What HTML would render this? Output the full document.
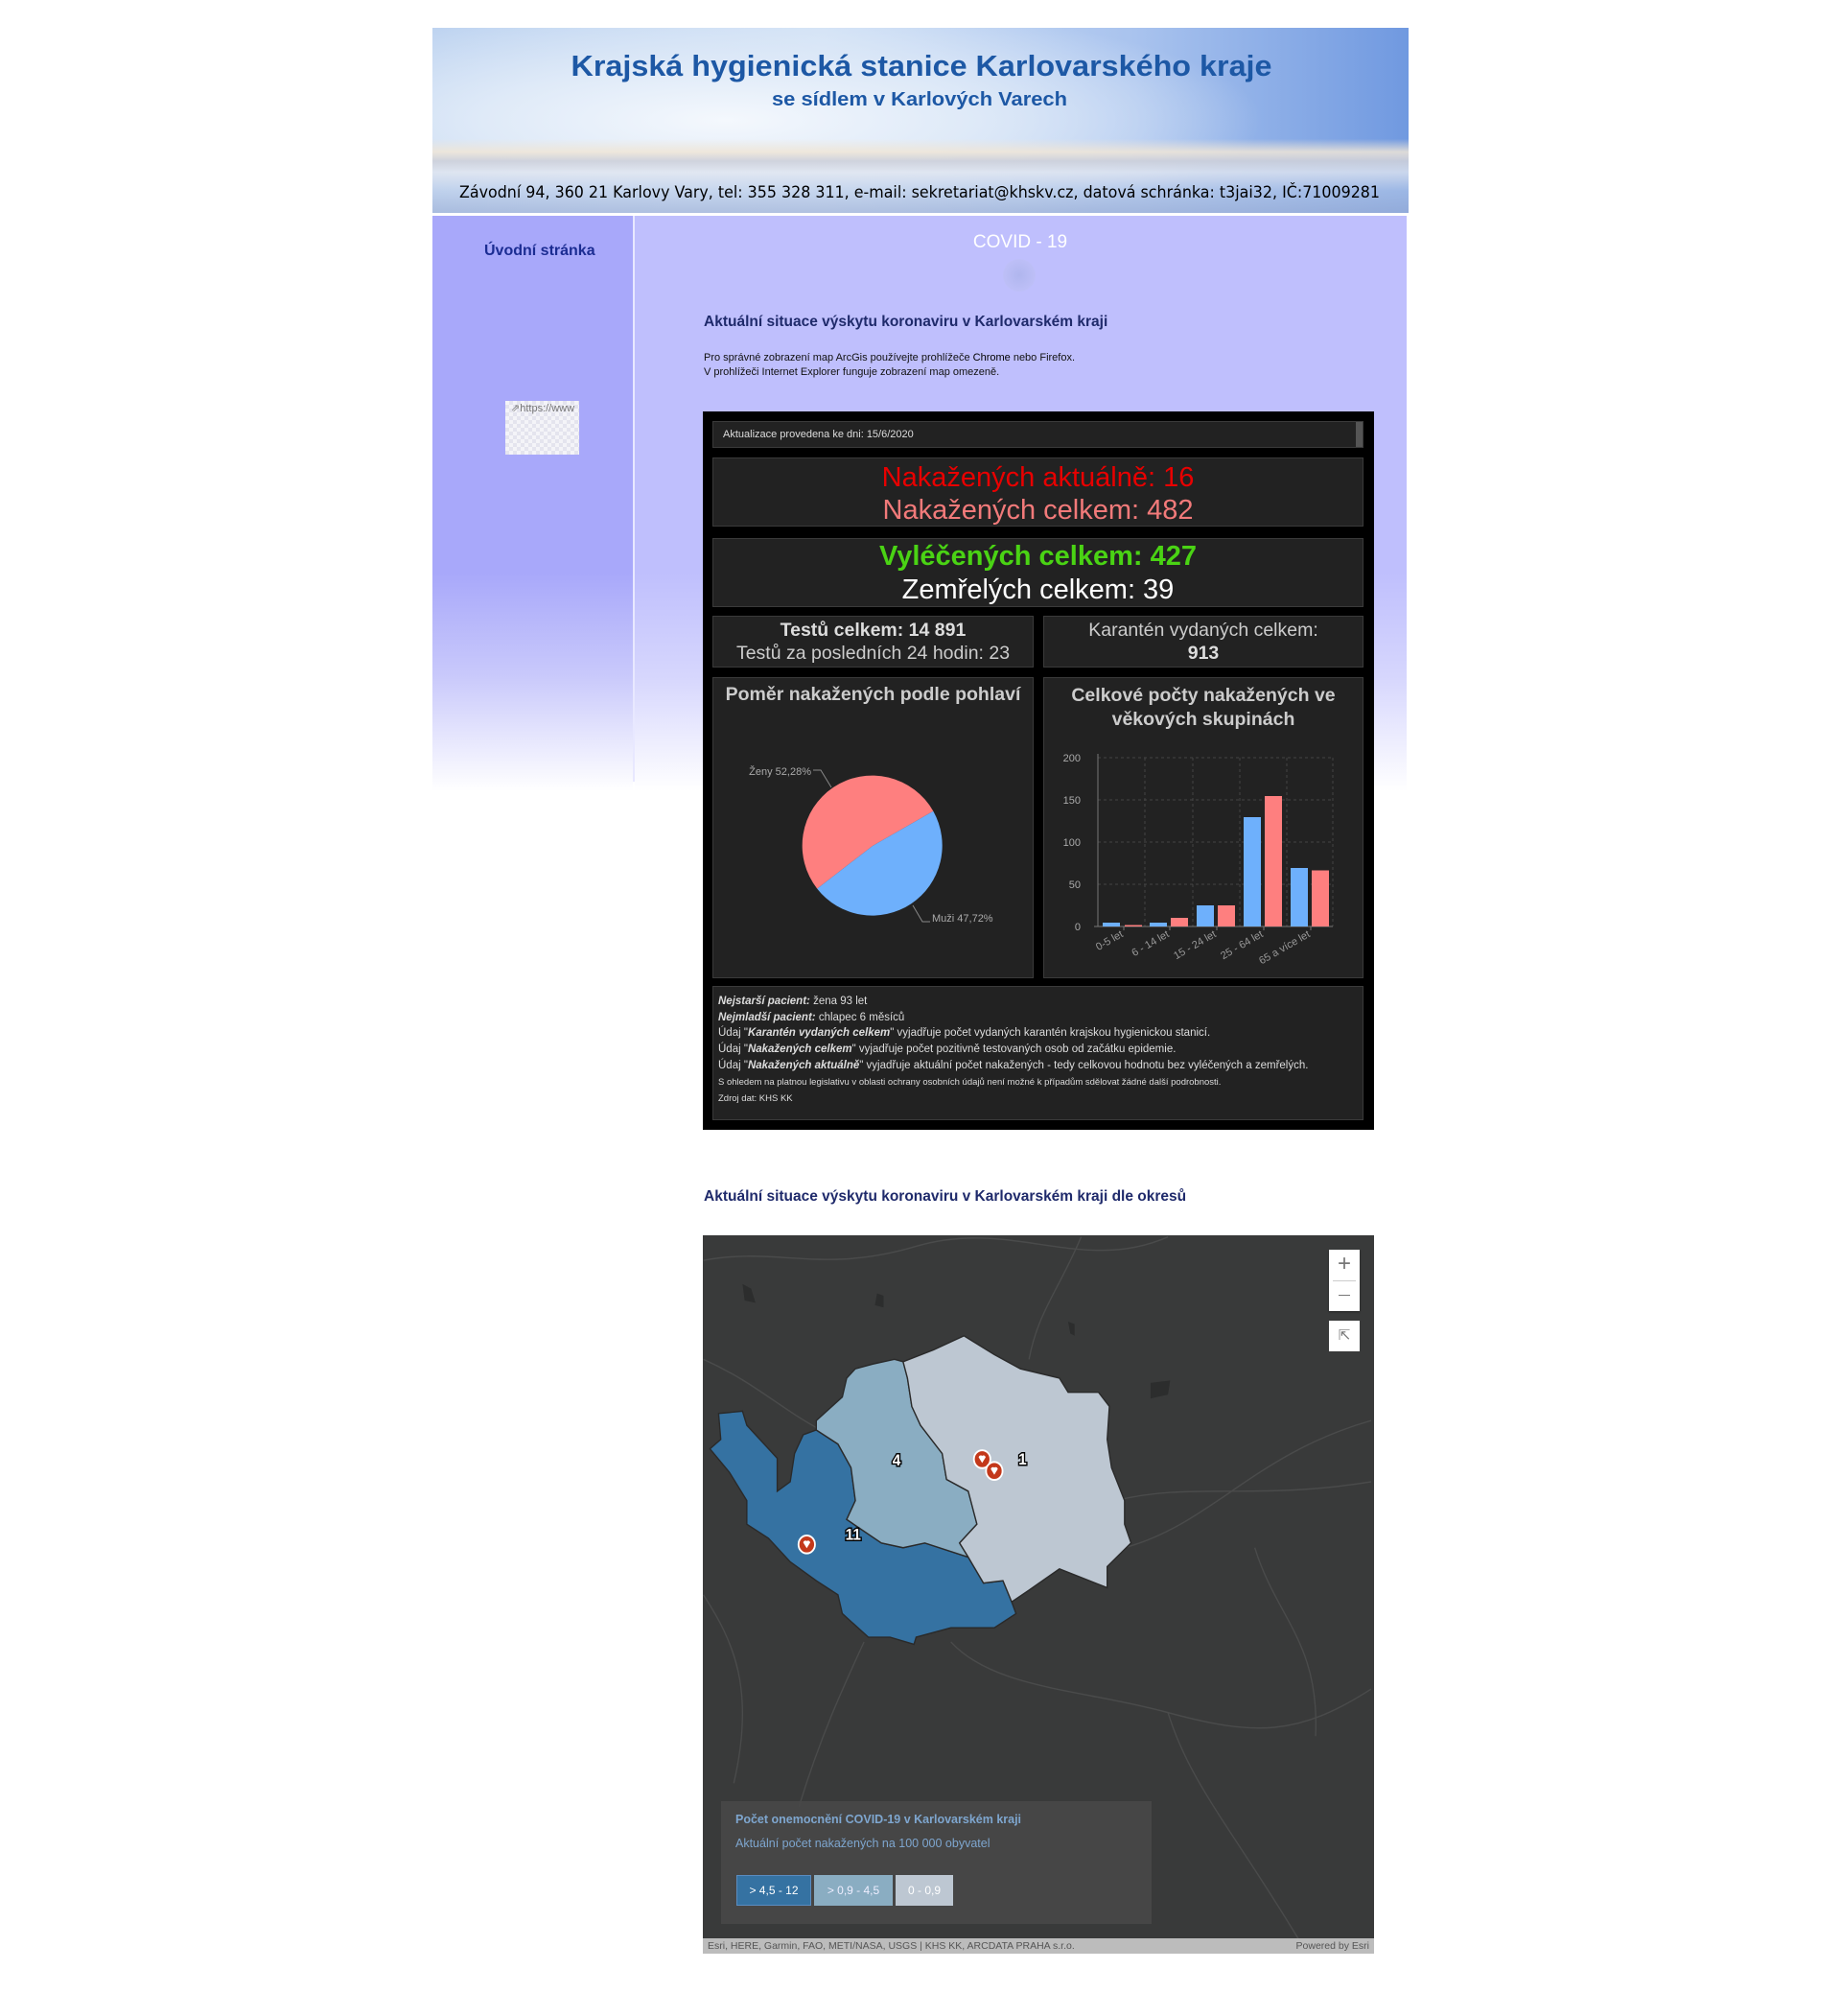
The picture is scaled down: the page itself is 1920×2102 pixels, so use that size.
<!DOCTYPE html>
<html><head><meta charset="utf-8">
<style>
*{margin:0;padding:0;box-sizing:border-box}
body{width:1920px;height:2102px;background:#fff;position:relative;overflow:hidden;font-family:"Liberation Sans",Arial,sans-serif}
.a{position:absolute}
.hdr{left:451px;top:29px;width:1018px;height:193px;overflow:hidden;
background:
linear-gradient(180deg,rgba(255,255,255,0) 0%,rgba(255,255,255,0) 60%,rgba(240,230,215,.85) 67%,rgba(205,208,218,.9) 72%,rgba(225,230,240,.8) 78%,rgba(185,203,232,.6) 88%,rgba(160,178,215,.7) 100%),
radial-gradient(ellipse 55% 65% at 30% 50%,#f4f8fd 0%,#dfeaf8 45%,rgba(200,220,245,0) 100%),
linear-gradient(90deg,#b9d0ef 0%,#cfe0f5 40%,#a9c3ee 72%,#7099e0 100%)}
.nav{left:451px;top:225px;width:209px;height:600px;background:linear-gradient(180deg,#a8a8fa 0%,#a8a8fa 62%,#c9c9fb 80%,#fff 100%)}
.main{left:662px;top:225px;width:805px;height:600px;background:linear-gradient(180deg,#bfbffd 0%,#bfbffd 62%,#d6d6fd 80%,#fff 100%)}
.navline{left:660px;top:225px;width:2px;height:590px;background:#e8e8ff}
.pan{background:#222;border:1px solid #3a3a3a}
.c{text-align:center}
.dash{left:733px;top:429px;width:700px;height:749px;background:#000}
</style></head><body>
<div class="a hdr"></div>
<svg class="a" style="left:451px;top:29px" width="1018" height="193">
<text x="510" y="50" text-anchor="middle" font-family="Liberation Sans" font-weight="bold" font-size="31" fill="#1d58a5" textLength="731" lengthAdjust="spacingAndGlyphs">Krajská hygienická stanice Karlovarského kraje</text>
<text x="508" y="81" text-anchor="middle" font-family="Liberation Sans" font-weight="bold" font-size="20" fill="#1d58a5" textLength="308" lengthAdjust="spacingAndGlyphs">se sídlem v Karlových Varech</text>
<text x="508" y="177" text-anchor="middle" font-family="DejaVu Sans" font-size="17" fill="#000" textLength="960" lengthAdjust="spacingAndGlyphs">Závodní 94, 360 21 Karlovy Vary, tel: 355 328 311, e-mail: sekretariat@khskv.cz, datová schránka: t3jai32, IČ:71009281</text>
</svg>
<div class="a nav"></div>
<div class="a main"></div>
<div class="a navline"></div>
<div class="a" style="left:505px;top:253px;width:120px;font-size:16px;font-weight:bold;color:#1b2c92;white-space:nowrap">Úvodní stránka</div>
<div class="a" style="left:527px;top:418px;width:77px;height:56px;background:repeating-conic-gradient(#e4e4ee 0 25%,#f4f4f8 0 50%) 0 0/8px 8px;font-size:11px;color:#777;padding:1px 0 0 6px;overflow:hidden;white-space:nowrap">⇗https://www</div>
<div class="a c" style="left:960px;top:242px;width:208px;font-size:19px;color:#fff">COVID - 19</div>
<div class="a" style="left:1046px;top:270px;width:34px;height:34px;border-radius:50%;background:radial-gradient(circle,#b0b6ee,#c3c3fb)"></div>
<div class="a" style="left:734px;top:327px;font-size:15.5px;font-weight:bold;color:#1f2a6b">Aktuální situace výskytu koronaviru v Karlovarském kraji</div>
<div class="a" style="left:734px;top:366px;font-size:11px;line-height:15px;color:#111">Pro správné zobrazení map ArcGis používejte prohlížeče <b style="font-weight:normal;color:#000">Chrome</b> nebo Firefox.<br>V prohlížeči Internet Explorer funguje zobrazení map omezeně.</div>

<div class="a dash"></div>
<div class="a pan" style="left:743px;top:439px;width:679px;height:28px;font-size:11px;color:#ddd;padding:7px 0 0 10px">Aktualizace provedena ke dni: 15/6/2020</div>
<div class="a" style="left:1414px;top:440px;width:7px;height:26px;background:#555"></div>
<div class="a pan c" style="left:743px;top:477px;width:679px;height:72px;padding-top:3px">
<div style="font-size:29px;line-height:34px;color:#e80000">Nakažených aktuálně: 16</div>
<div style="font-size:29px;line-height:34px;color:#f27a7a">Nakažených celkem: 482</div></div>
<div class="a pan c" style="left:743px;top:561px;width:679px;height:72px;padding-top:1px">
<div style="font-size:29px;line-height:35px;color:#4ad314;font-weight:bold">Vyléčených celkem: 427</div>
<div style="font-size:29px;line-height:35px;color:#fff">Zemřelých celkem: 39</div></div>
<div class="a pan c" style="left:743px;top:642px;width:335px;height:54px;padding-top:2px">
<div style="font-size:19.5px;line-height:24px;color:#ddd;font-weight:bold">Testů celkem: 14 891</div>
<div style="font-size:19.5px;line-height:24px;color:#ccc">Testů za posledních 24 hodin: 23</div></div>
<div class="a pan c" style="left:1088px;top:642px;width:334px;height:54px;padding-top:2px">
<div style="font-size:19.5px;line-height:24px;color:#ccc">Karantén vydaných celkem:</div>
<div style="font-size:19.5px;line-height:24px;color:#ddd;font-weight:bold">913</div></div>
<div class="a pan c" style="left:743px;top:706px;width:335px;height:314px;padding-top:6px;font-size:19.5px;font-weight:bold;color:#ccc">Poměr nakažených podle pohlaví</div>
<div class="a pan c" style="left:1088px;top:706px;width:334px;height:314px;padding-top:6px;font-size:19.5px;line-height:25px;font-weight:bold;color:#ccc">Celkové počty nakažených ve<br>věkových skupinách</div>
<div class="a pan" style="left:743px;top:1028px;width:679px;height:140px;padding:7px 0 0 5px;font-size:11.5px;line-height:16.7px;color:#ddd">
<i style="font-weight:bold">Nejstarší pacient:</i> žena 93 let<br>
<i style="font-weight:bold">Nejmladší pacient:</i> chlapec 6 měsíců<br>
Údaj "<i style="font-weight:bold">Karantén vydaných celkem</i>" vyjadřuje počet vydaných karantén krajskou hygienickou stanicí.<br>
Údaj "<i style="font-weight:bold">Nakažených celkem</i>" vyjadřuje počet pozitivně testovaných osob od začátku epidemie.<br>
Údaj "<i style="font-weight:bold">Nakažených aktuálně</i>" vyjadřuje aktuální počet nakažených - tedy celkovou hodnotu bez vyléčených a zemřelých.<br>
<span style="font-size:9.5px">S ohledem na platnou legislativu v oblasti ochrany osobních údajů není možné k případům sdělovat žádné další podrobnosti.</span><br>
<span style="font-size:9.5px">Zdroj dat: KHS KK</span></div>

<svg class="a" style="left:0;top:0" width="1920" height="1100" font-family="Liberation Sans">
<path d="M910,882 L852.2,926.6 A73,73 0 1,1 973.3,845.8 Z" fill="#fe7f7f"/>
<path d="M910,882 L973.3,845.8 A73,73 0 0,1 852.2,926.6 Z" fill="#6eb0fc"/>
<polyline points="848,803 856,803 867,821" fill="none" stroke="#888" stroke-width="1"/>
<text x="846" y="808" text-anchor="end" font-size="11" fill="#aaa">Ženy 52,28%</text>
<polyline points="952,944 962,961 970,961" fill="none" stroke="#888" stroke-width="1"/>
<text x="972" y="961" font-size="11" fill="#aaa">Muži 47,72%</text>
<g stroke="#444" stroke-dasharray="3,3" stroke-width="1">
<line x1="1145" y1="790" x2="1390" y2="790"/><line x1="1145" y1="834" x2="1390" y2="834"/>
<line x1="1145" y1="878" x2="1390" y2="878"/><line x1="1145" y1="922" x2="1390" y2="922"/>
<line x1="1194" y1="790" x2="1194" y2="966"/><line x1="1244" y1="790" x2="1244" y2="966"/>
<line x1="1293" y1="790" x2="1293" y2="966"/><line x1="1342" y1="790" x2="1342" y2="966"/><line x1="1390" y1="790" x2="1390" y2="966"/>
</g>
<line x1="1145" y1="786" x2="1145" y2="966" stroke="#777"/>
<line x1="1141" y1="966" x2="1390" y2="966" stroke="#777"/>
<g fill="#aaa" font-size="11" text-anchor="end">
<text x="1127" y="794">200</text><text x="1127" y="838">150</text><text x="1127" y="882">100</text><text x="1127" y="926">50</text><text x="1127" y="970">0</text></g>
<g fill="#6eb0fc"><rect x="1150" y="962" width="18" height="4"/><rect x="1199" y="962" width="18" height="4"/><rect x="1248" y="944" width="18" height="22"/><rect x="1297" y="852" width="18" height="114"/><rect x="1346" y="905" width="18" height="61"/></g>
<g fill="#fe7f7f"><rect x="1173" y="964.5" width="18" height="1.5"/><rect x="1221" y="957" width="18" height="9"/><rect x="1270" y="944" width="18" height="22"/><rect x="1319" y="830" width="18" height="136"/><rect x="1368" y="907.5" width="18" height="58.5"/></g>
<g stroke="#777"><line x1="1172" y1="966" x2="1172" y2="970"/><line x1="1220" y1="966" x2="1220" y2="970"/><line x1="1269" y1="966" x2="1269" y2="970"/><line x1="1318" y1="966" x2="1318" y2="970"/><line x1="1367" y1="966" x2="1367" y2="970"/></g>
<g fill="#999" font-size="11" text-anchor="end">
<text transform="translate(1172,976) rotate(-30)">0-5 let</text>
<text transform="translate(1220,976) rotate(-30)">6 - 14 let</text>
<text transform="translate(1269,976) rotate(-30)">15 - 24 let</text>
<text transform="translate(1318,976) rotate(-30)">25 - 64 let</text>
<text transform="translate(1367,976) rotate(-30)">65 a více let</text></g>
</svg>

<div class="a" style="left:734px;top:1239px;font-size:15.5px;font-weight:bold;color:#1f2a6b">Aktuální situace výskytu koronaviru v Karlovarském kraji dle okresů</div>

<div class="a" style="left:733px;top:1288px;width:700px;height:749px;background:#393a3a;overflow:hidden">
<svg class="a" style="left:-13px;top:-18px" width="710" height="770" viewBox="0 0 1568 1568" preserveAspectRatio="none">
<g fill="none" stroke="#4a4b4b" stroke-width="3">
<path d="M30,90 C200,60 300,120 520,60 S900,120 1100,40"/>
<path d="M900,40 C850,150 800,200 780,300"/>
<path d="M1000,700 C1200,650 1300,500 1568,430"/>
<path d="M980,600 C1150,560 1300,600 1568,560"/>
<path d="M600,900 C700,1000 900,1000 1100,1050 S1400,1100 1568,1000"/>
<path d="M400,900 C350,1000 300,1100 250,1250"/>
<path d="M1100,1050 C1150,1200 1250,1300 1400,1530"/>
<path d="M30,800 C100,900 150,1000 100,1200"/>
<path d="M1300,700 C1350,850 1450,900 1440,1100"/>
<path d="M30,300 C150,350 200,400 300,450"/>
</g>
<g fill="#2c2d2d"><path d="M120,140 l20,10 10,30 -25,-5z"/><path d="M430,160 l15,5 0,25 -20,-5z"/><path d="M1060,350 l45,-5 -5,30 -40,8z"/><path d="M870,220 l15,5 0,25 -10,-5z"/></g>
<path fill="#3572a2" stroke="#2a2a2a" stroke-width="3" d="M290,450 L340,480 370,530 380,600 360,640 440,690 490,700 540,690 640,720 675,775 720,770 740,815 750,840 700,870 600,870 520,890 515,905 460,890 410,890 350,840 340,800 290,770 230,730 180,680 130,650 130,600 90,540 45,490 70,470 65,415 120,410 130,440 180,490 200,510 200,580 230,560 240,500 260,460 Z"/>
<path fill="#8aadc2" stroke="#2a2a2a" stroke-width="3" d="M490,305 L500,340 510,400 530,440 580,500 590,555 640,580 660,650 620,690 640,720 540,690 490,700 440,690 360,640 380,600 370,530 340,480 290,450 290,430 350,380 360,340 380,320 420,310 470,300 Z"/>
<path fill="#bdc7d2" stroke="#2a2a2a" stroke-width="3" d="M490,305 L560,280 630,250 700,290 760,320 850,340 870,370 940,370 965,400 960,470 970,530 1000,600 1000,650 1015,690 960,740 960,785 850,745 780,790 740,815 720,770 675,775 640,720 620,690 660,650 640,580 590,555 580,500 530,440 510,400 500,340 Z"/>
<g fill="#fff" stroke="#000" stroke-width="6" paint-order="stroke" font-family="Liberation Sans" font-weight="bold" font-size="34" text-anchor="middle">
<text x="475" y="525">4</text><text x="765" y="523">1</text><text x="375" y="683">11</text></g>
<g fill="#c3381a" stroke="#fff" stroke-width="4">
<circle cx="672" cy="512" r="19"/><circle cx="700" cy="537" r="19"/><circle cx="268" cy="693" r="19"/></g>
<g fill="#fff"><path d="M664,508 a5,5 0 0 1 8,-3 a5,5 0 0 1 8,3 l-8,12z"/><path d="M692,533 a5,5 0 0 1 8,-3 a5,5 0 0 1 8,3 l-8,12z"/><path d="M260,689 a5,5 0 0 1 8,-3 a5,5 0 0 1 8,3 l-8,12z"/></g>
</svg>
<div class="a" style="left:653px;top:15px;width:32px;height:64px;background:#fff;box-shadow:0 1px 2px rgba(0,0,0,.4)"></div>
<div class="a" style="left:657px;top:47px;width:24px;height:1px;background:#ccc"></div>
<div class="a c" style="left:653px;top:16px;width:32px;font-size:24px;line-height:28px;color:#777">+</div>
<div class="a" style="left:663px;top:62px;width:12px;height:1px;background:#777"></div>
<div class="a c" style="left:653px;top:89px;width:32px;height:32px;background:#fff;font-size:15px;line-height:32px;color:#777">⇱</div>
<div class="a" style="left:19px;top:590px;width:449px;height:128px;background:rgba(72,72,72,.9)">
<div class="a" style="left:15px;top:12px;font-size:12.5px;font-weight:bold;color:#7ea6cf;white-space:nowrap">Počet onemocnění COVID-19 v Karlovarském kraji</div>
<div class="a" style="left:15px;top:37px;font-size:12.5px;color:#7ea6cf;white-space:nowrap">Aktuální počet nakažených na 100 000 obyvatel</div>
<div class="a c" style="left:16px;top:77px;width:78px;height:32px;background:#3572a2;border:1px solid #5a8cc0;color:#fff;font-size:12px;line-height:30px">&gt; 4,5 - 12</div>
<div class="a c" style="left:97px;top:77px;width:82px;height:32px;background:#8aadc2;color:#eef;font-size:12px;line-height:32px">&gt; 0,9 - 4,5</div>
<div class="a c" style="left:182px;top:77px;width:60px;height:32px;background:#bdc7d2;color:#fff;font-size:12px;line-height:32px">0 - 0,9</div>
</div>
<div class="a" style="left:0;top:733px;width:700px;height:16px;background:#bcbcbc;font-size:10.5px;line-height:16px;color:#555;padding:0 5px">Esri, HERE, Garmin, FAO, METI/NASA, USGS | KHS KK, ARCDATA PRAHA s.r.o.<span style="float:right">Powered by Esri</span></div>
</div>
</body></html>
